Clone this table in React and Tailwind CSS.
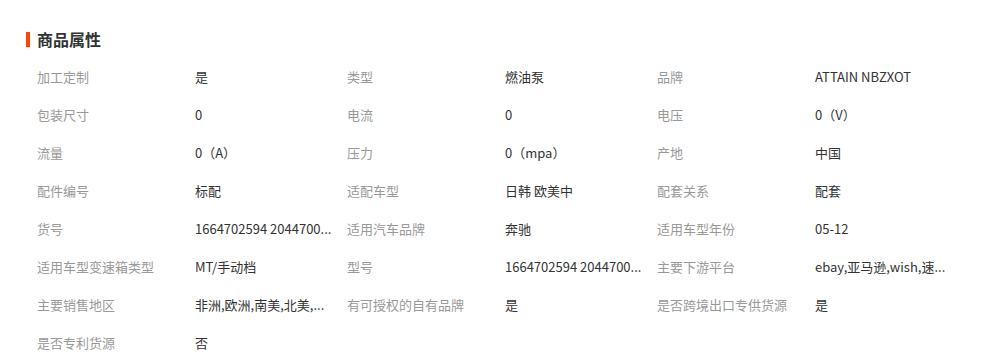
const rows = [
  ['加工定制', '是', '类型', '燃油泵', '品牌', 'ATTAIN NBZXOT'],
  ['包装尺寸', '0', '电流', '0', '电压', '0（V）'],
  ['流量', '0（A）', '压力', '0（mpa）', '产地', '中国'],
  ['配件编号', '标配', '适配车型', '日韩 欧美中', '配套关系', '配套'],
  ['货号', '1664702594 2044700...', '适用汽车品牌', '奔驰', '适用车型年份', '05-12'],
  ['适用车型变速箱类型', 'MT/手动档', '型号', '1664702594 2044700...', '主要下游平台', 'ebay,亚马逊,wish,速...'],
  ['主要销售地区', '非洲,欧洲,南美,北美,...', '有可授权的自有品牌', '是', '是否跨境出口专供货源', '是'],
  ['是否专利货源', '否'],
];

const Cell = ({ label, value }) => (
  <div className="flex w-[310px] h-[38px] items-center">
    <div className="w-[158px] text-[#999] whitespace-nowrap">{label}</div>
    <div className="w-[150px] text-[#333] whitespace-nowrap">{value}</div>
  </div>
);

export default function App() {
  const pairs = [];
  rows.forEach((r) => {
    for (let i = 0; i < 6; i += 2) {
      if (r[i]) pairs.push({ label: r[i], value: r[i + 1] });
    }
  });

  return (
    <div
      className="w-[985px] h-[357px] bg-white overflow-hidden"
      style={{ fontFamily: '"Noto Sans CJK SC", "Noto Sans", sans-serif' }}
    >
      <div className="flex items-center pl-[26px] pt-[31px] h-[47px]">
        <div className="w-[4px] h-[15px] bg-[#ff4400]" />
        <div className="ml-[7px] text-[16px] leading-[16px] font-bold text-[#333]">商品属性</div>
      </div>
      <div className="grid grid-cols-[310px_310px_310px] pl-[37px] mt-[11px] text-[13px]">
        {pairs.map((p, i) => (
          <Cell key={i} label={p.label} value={p.value} />
        ))}
      </div>
    </div>
  );
}
